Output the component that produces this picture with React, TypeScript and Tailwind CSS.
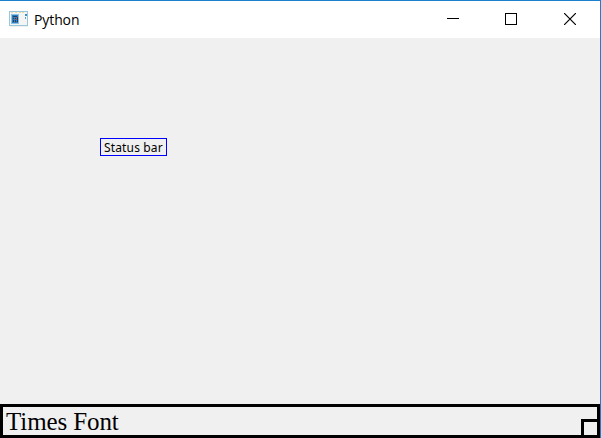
function AppIcon() {
  return (
    <svg width="20" height="17" viewBox="0 0 20 17" shapeRendering="crispEdges" aria-hidden="true">
      <rect x="1" y="15" width="18" height="1" fill="#f1f1ef" />
      <rect x="0" y="0" width="19" height="15" fill="#9ac6dc" />
      <rect x="1" y="1" width="17" height="13" fill="#f5f5f3" />
      <path d="M2 1h2v1H2zM6 1h2v1H6zM10 1h2v1h-2zM13 1h2v1h-2z" fill="#ecd9a4" />
      <rect x="2" y="3" width="8" height="10" fill="#8fc3e2" />
      <rect x="3" y="4" width="6" height="8" fill="#2a7fc0" />
      <path d="M4 5h4v1H4zM4 7h1v1H4zM6 7h1v1H6zM4 9h1v2H4zM6 9h1v2H6zM8 6h1v5H8z" fill="#16456f" />
      <path d="M5 6h1v1H5zM7 6h1v1H7zM5 8h1v1H5zM7 8h1v1H7zM5 10h1v1H5z" fill="#b0605a" />
      <rect x="16" y="3" width="2" height="2" fill="#3f91bd" />
      <rect x="16" y="6" width="1" height="2" fill="#5ba5cc" />
    </svg>
  );
}

export default function App() {
  return (
    <div className="flex h-[438px] w-[601px] flex-col overflow-hidden border-t border-r border-[#1b80ce] bg-[#f0f0f0] text-black">
      <header className="flex h-[37px] shrink-0 items-center justify-between bg-white pr-6 pl-[9px]">
        <div className="flex items-center gap-[5px]">
          <AppIcon />
          <h1 className="font-['Open_Sans',sans-serif] text-[14px] leading-5 tracking-[-0.1px]">Python</h1>
        </div>
        <div className="flex items-center pb-px">
          <button aria-label="Minimize" className="mr-[46px]">
            <svg className="block" width="12" height="12" shapeRendering="crispEdges">
              <path d="M0 5.5h12" stroke="black" />
            </svg>
          </button>
          <button aria-label="Maximize" className="mr-[47px]">
            <svg className="block" width="12" height="12" shapeRendering="crispEdges">
              <path d="M.5.5h11v11H.5z" fill="none" stroke="black" />
            </svg>
          </button>
          <button aria-label="Close">
            <svg className="block" width="12" height="12">
              <path d="M0 0l12 12M12 0L0 12" stroke="black" strokeWidth="1.2" />
            </svg>
          </button>
        </div>
      </header>
      <main className="flex-1 pt-[100px] pl-[100px]">
        <div className="flex h-[18px] w-[67px] items-center border border-[#0000ff] pt-px pl-[3px] font-['Noto_Sans',sans-serif] text-[12px] leading-4 tracking-[0.15px] whitespace-nowrap">
          Status bar
        </div>
      </main>
      <footer className="flex h-[34px] shrink-0 items-end justify-between border-[3px] border-black pl-[3px]">
        <span className="font-['Liberation_Serif',serif] text-[25px] leading-[27px] tracking-[-0.1px]">Times Font</span>
        <div className="h-[16px] w-[16px] border-t-[3px] border-l-[3px] border-black" />
      </footer>
    </div>
  );
}
